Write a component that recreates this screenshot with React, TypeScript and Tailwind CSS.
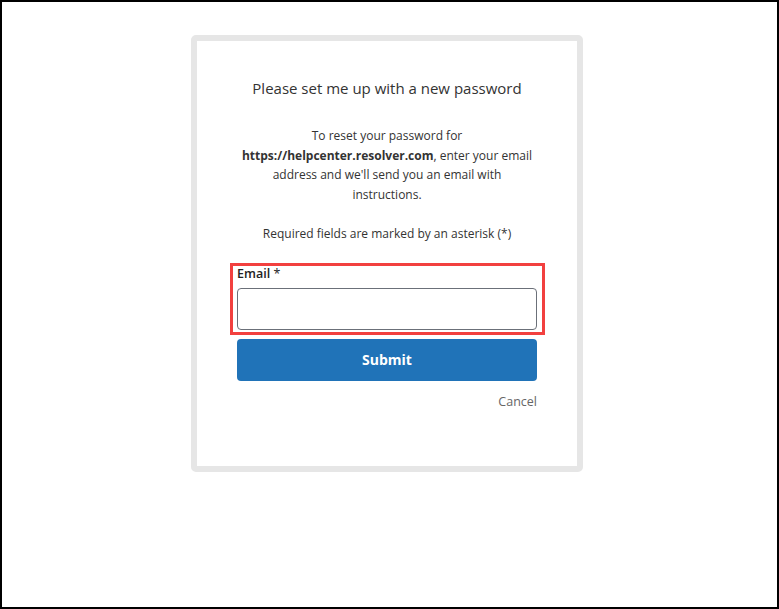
export default function App() {
  return (
    <div className="h-[609px] border-2 border-black bg-white font-['Open_Sans','Noto_Sans',sans-serif] text-[#333]">
      <div className="ml-[189px] mt-[33px] w-[392px] rounded-[5px] border-[6px] border-[#e6e6e6] bg-white">
        <div className="flex h-[425px] flex-col px-[40px]">
          <h1 className="mt-[36px] text-center text-[15px] leading-[22px] text-[#333]">
            Please set me up with a new password
          </h1>
          <p className="mt-[27px] text-center text-[12px] leading-[19.5px]">
            To reset your password for{" "}
            <span className="font-bold">https://helpcenter.resolver.com</span>, enter your email address and we'll send you an email with instructions.
          </p>
          <p className="mt-[20px] text-center text-[12px] leading-[19.5px]">
            Required fields are marked by an asterisk (*)
          </p>
          <div className="-ml-[7px] -mr-[8px] mt-[19px] border-[3px] border-[#f2403f] pb-[2px] pl-[4px] pr-[5px]">
            <label className="block text-[12.5px] font-semibold leading-[16px] text-[#222]">
              Email <span className="font-normal">*</span>
            </label>
            <input
              type="email"
              className="mt-[6px] block h-[42px] w-full rounded-[4px] border border-[#6b7079] bg-white px-2 outline-none"
            />
          </div>
          <button className="mt-[4px] h-[42px] w-full rounded-[4px] bg-[#2073b8] text-[14px] font-bold text-white">
            Submit
          </button>
          <div className="mt-[7px] text-right">
            <a className="text-[12.5px] leading-[18px] text-[#666]">Cancel</a>
          </div>
        </div>
      </div>
    </div>
  );
}
